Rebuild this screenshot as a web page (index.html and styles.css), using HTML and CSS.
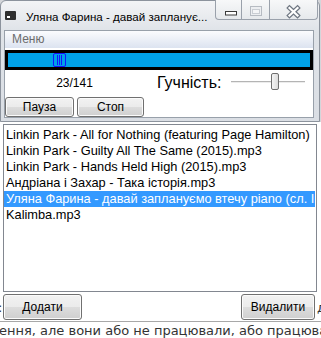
FILE: index.html
```html
<!DOCTYPE html>
<html>
  <head>
    <title>Плеєр</title>
    <link rel="stylesheet" href="styles.css">
  </head>
  <body>
    <div class="top">
      <div class="app">
        <div class="titlebar">
          <span class="app-icon"><span></span></span>
          <span class="title">Уляна Фарина - давай запланує...</span>
          <div class="caption">
            <span class="cap cap-min">
              <svg width="27" height="20" viewBox="0 0 27 20"><rect x="10.5" y="11.5" width="11" height="3.5" fill="#fff" stroke="#3a3a3a"/></svg>
            </span>
            <span class="cap cap-max">
              <svg width="28" height="20" viewBox="0 0 28 20"><rect x="9.5" y="6.5" width="11" height="9" fill="#eceef1" stroke="#b6bbc2"/><rect x="11.5" y="9.5" width="7" height="4" fill="#f4f5f7" stroke="#c9cdd3"/></svg>
            </span>
            <span class="cap cap-close">
              <svg width="48" height="20" viewBox="0 0 48 20">
                <path d="M20.5 8 L28.5 15.5 M28.5 8 L20.5 15.5" stroke="#6f7782" stroke-width="4.6" stroke-linecap="square"/>
                <path d="M20.5 8 L28.5 15.5 M28.5 8 L20.5 15.5" stroke="#fff" stroke-width="2.2" stroke-linecap="square"/>
              </svg>
            </span>
          </div>
        </div>

        <div class="client">
          <div class="menubar"><span>Меню</span></div>
          <div class="seek">
            <div class="seek-fill">
              <svg class="seek-thumb" width="13" height="14" viewBox="0 0 13 14">
                <rect x="0.5" y="0.5" width="12" height="13" rx="1.5" fill="#00a2e8" stroke="#1414ff"/>
                <path d="M4.5 2 V12 M6.5 2 V12 M8.5 2 V12" stroke="#1414ff"/>
              </svg>
            </div>
          </div>
          <div class="controls">
            <div class="controls-left">
              <div class="counter">23/141</div>
              <div class="controls-btns">
                <button class="btn btn-pause">Пауза</button>
                <button class="btn btn-stop">Стоп</button>
              </div>
            </div>
            <div class="volume">
              <span class="volume-label">Гучність:</span>
              <div class="slider"><span class="slider-thumb"></span></div>
            </div>
          </div>
        </div>
      </div>
    </div>

    <div class="below">
      <ul class="playlist">
        <li>Linkin Park - All for Nothing (featuring Page Hamilton)</li>
        <li>Linkin Park - Guilty All The Same (2015).mp3</li>
        <li>Linkin Park - Hands Held High (2015).mp3</li>
        <li>Андріана і Захар - Така історія.mp3</li>
        <li class="selected">Уляна Фарина - давай заплануємо втечу piano (сл. Іван Федишин).mp3</li>
        <li>Kalimba.mp3</li>
      </ul>

      <div class="list-actions">
        <span class="edge edge-left">:</span>
        <button class="btn btn-add">Додати</button>
        <span class="spacer"></span>
        <button class="btn btn-remove">Видалити</button>
        <span class="edge edge-right">д</span>
      </div>

      <p class="bg-text">ення, але вони або не працювали, або працювали</p>
    </div>
  </body>
</html>
```

FILE: styles.css
```css
body {
  margin: 0;
  width: 321px;
  height: 338px;
  overflow: hidden;
  background-color: #fff;
  font-family: "Liberation Sans", Arial, sans-serif;
}

.top {
  background-color: #d4d6da;
}

.app {
  width: 312px;
  padding: 0 3px 3px 3px;
  border: 1px solid #8c939d;
  border-radius: 6px 6px 0 0;
  background: linear-gradient(#f3f4f6, #dfe3e8 30px, #dadee4);
}

/* title bar */

.titlebar {
  display: flex;
  align-items: flex-start;
  height: 29px;
  margin: 0 -3px;
  padding-left: 4px;
}

.app-icon {
  position: relative;
  width: 11px;
  height: 9px;
  margin-top: 10px;
  background-color: #2f2f2f;
  border-radius: 1px;
}

.app-icon span {
  position: absolute;
  left: 2px;
  bottom: 2px;
  width: 3px;
  height: 2px;
  background-color: #fff;
}

.title {
  margin-left: 10px;
  margin-top: 8px;
  font-size: 11.6px;
  line-height: 15px;
  color: #000;
  white-space: nowrap;
}

.caption {
  display: flex;
  margin-left: auto;
  margin-right: 1px;
  margin-top: -1px;
}

.cap {
  display: block;
  height: 20px;
  border: 1px solid #9aa1ab;
  border-top: none;
  background: linear-gradient(#f7f8f9, #e6e9ec);
  box-sizing: border-box;
}

.cap svg {
  display: block;
  margin-left: -1px;
}

.cap-min {
  width: 27px;
  border-radius: 0 0 0 4px;
}

.cap-max {
  width: 28px;
  border-left: none;
}

.cap-close {
  width: 48px;
  border-left: none;
  border-radius: 0 0 4px 0;
}

/* client area */

.client {
  width: 308px;
  height: 86px;
  border: 1px solid #98a0aa;
  background-color: #fff;
}

.menubar {
  height: 17px;
  background: linear-gradient(#fbfcfe, #dce3f0);
  font-size: 12px;
  line-height: 17px;
  color: #6d6d6d;
  padding-left: 7px;
}

.seek {
  margin-top: 2px;
  height: 14px;
  border: 3px solid #000;
}

.seek-fill {
  position: relative;
  height: 14px;
  background-color: #00a2e8;
}

.seek-thumb {
  position: absolute;
  left: 45px;
  top: 0;
}

.controls {
  display: flex;
}

.controls-left {
  width: 139px;
  padding-top: 6px;
}

.counter {
  text-align: center;
  font-size: 12px;
  line-height: 14px;
  color: #000;
}

.controls-btns {
  display: flex;
  gap: 3px;
  margin-top: 7px;
}

.btn {
  height: 20px;
  padding: 0;
  border: 1px solid #707070;
  border-radius: 3px;
  background: linear-gradient(#f2f2f2, #ebebeb 50%, #dddddd 50%, #cfcfcf);
  box-shadow: inset 0 0 0 1px #fbfbfb;
  font-family: "Liberation Sans", Arial, sans-serif;
  font-size: 12px;
  color: #000;
}

.btn-pause {
  width: 69px;
}

.btn-stop {
  width: 67px;
}

.volume {
  display: flex;
  align-items: center;
  height: 19px;
  margin-left: 13px;
  padding-top: 3px;
}

.volume-label {
  font-size: 16px;
  line-height: 19px;
  color: #000;
}

.slider {
  position: relative;
  width: 74px;
  height: 19px;
  margin-left: 10px;
}

.slider::before {
  content: "";
  position: absolute;
  left: 0;
  right: 0;
  top: 8px;
  height: 1px;
  background-color: #b4b4b4;
  border-bottom: 1px solid #ececec;
}

.slider-thumb {
  position: absolute;
  left: 40px;
  top: 0;
  width: 6px;
  height: 15px;
  border: 1px solid #6f6f6f;
  border-radius: 2px;
  background: linear-gradient(90deg, #f4f4f4, #dcdcdc);
}

/* window below */

.below {
  padding-top: 2px;
}

.playlist {
  list-style: none;
  margin: 0 0 0 3px;
  padding: 2px 0 0 0;
  width: 312px;
  height: 164px;
  border: 1px solid #828790;
  overflow: hidden;
  font-size: 12.8px;
  color: #000;
}

.playlist li {
  height: 16px;
  line-height: 16px;
  padding-left: 2px;
  margin-right: 1px;
  white-space: nowrap;
  overflow: hidden;
}

.playlist li.selected {
  background-color: #3399ff;
  color: #fff;
}

.list-actions {
  display: flex;
  align-items: center;
  margin-top: 2px;
  height: 26px;
}

.list-actions .btn {
  height: 26px;
}

.btn-add {
  width: 79px;
}

.btn-remove {
  width: 74px;
}

.spacer {
  flex: 1;
}

.edge {
  overflow: hidden;
  font-family: "DejaVu Sans", Verdana, sans-serif;
  font-size: 13px;
  color: #333;
  white-space: nowrap;
}

.edge-left {
  width: 3px;
  text-indent: -2px;
}

.edge-right {
  width: 4px;
  margin-left: 2px;
}

.bg-text {
  margin: 1px 0 0 0;
  border-top: 1px solid #a8a8a8;
  font-family: "DejaVu Sans", Verdana, sans-serif;
  font-size: 13px;
  line-height: 18px;
  color: #333;
  white-space: nowrap;
  overflow: hidden;
  text-indent: -1px;
}
```
